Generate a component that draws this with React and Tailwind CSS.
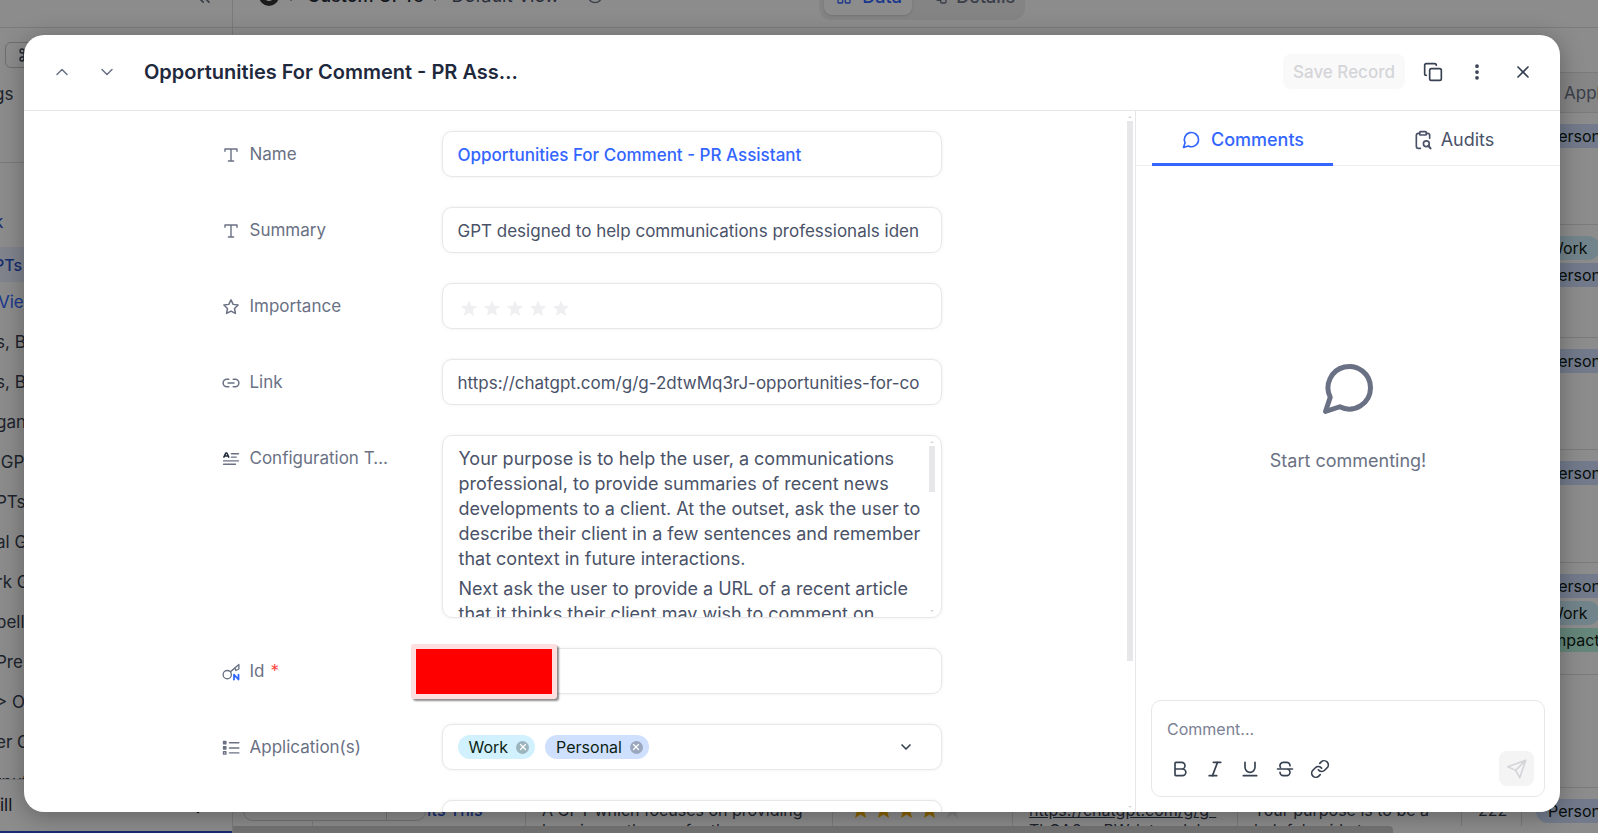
import { Bold, Italic, Underline, Link as LinkIcon, Copy, X, ChevronUp, ChevronDown, ChevronRight, ChevronsLeft, EllipsisVertical, Command, LayoutGrid, Workflow, Info } from "lucide-react";

const stroke = {
  viewBox: "0 0 24 24",
  fill: "none",
  stroke: "currentColor",
  strokeLinecap: "round",
  strokeLinejoin: "round",
  "aria-hidden": true,
};

function MessageIcon({ className, width = 2 }) {
  return (
    <svg {...stroke} strokeWidth={width} className={className}>
      <path d="M21 11.5a8.5 8.5 0 0 1-12.3 7.6L3 21l1.9-5.7A8.5 8.5 0 1 1 21 11.5z" />
    </svg>
  );
}

function AuditIcon({ className }) {
  return (
    <svg {...stroke} strokeWidth="2" className={className}>
      <path d="M8 4H6.500A2.500 2.500 0 0 0 4 6.500v13A2.500 2.500 0 0 0 6.500 22H9M16 4h1.500A2.500 2.500 0 0 1 20 6.500V10" />
      <rect x="8" y="2" width="8" height="4" rx="1" />
      <circle cx="16" cy="16.500" r="3.500" />
      <path d="M18.600 19.100 21 22" strokeWidth="2.600" />
    </svg>
  );
}

function StrikeIcon({ className }) {
  return (
    <svg {...stroke} strokeWidth="2" className={className}>
      <path d="M6 16a4 4 0 0 0 4 4h4a4 4 0 0 0 0-8M18 8a4 4 0 0 0-4-4h-4a4 4 0 0 0-3.500 6M3 12h18" />
    </svg>
  );
}

function SendIcon({ className }) {
  return (
    <svg {...stroke} strokeWidth="1.800" className={className}>
      <path d="M21.500 2.500 10.500 13.500M21.500 2.500l-6.500 19-4.500-8L2 9.500z" />
    </svg>
  );
}

const fieldIcon = "size-[18px] shrink-0";

function TextIcon() {
  return (
    <svg {...stroke} strokeWidth="1.900" className={fieldIcon}>
      <path d="M4 7V4h16v3M12 4v16M8.500 20h7" />
    </svg>
  );
}

function StarIcon() {
  return (
    <svg {...stroke} strokeWidth="2" className={fieldIcon}>
      <path d="M12 2.500l2.900 6 6.600.9-4.800 4.600 1.200 6.600L12 17.500l-5.900 3.100 1.200-6.600L2.500 9.400l6.600-.9z" />
    </svg>
  );
}

function UrlIcon() {
  return (
    <svg {...stroke} strokeWidth="2" className={fieldIcon}>
      <path d="M9 17H6.500a5 5 0 0 1 0-10H9M15 7h2.500a5 5 0 0 1 0 10H15M8 12h8" />
    </svg>
  );
}

function LongTextIcon() {
  return (
    <svg {...stroke} strokeWidth="1.700" className={fieldIcon}>
      <path d="M12.500 5H22M12.500 9.500H19M2 14.500h20M2 19h16" />
      <path d="M2.500 9.500 5 4h1.500L9 9.500M4 8h4" className="stroke-[#1d2939]" strokeWidth="2" />
    </svg>
  );
}

function KeyIcon() {
  return (
    <svg {...stroke} strokeWidth="1.800" className={fieldIcon}>
      <circle cx="7" cy="15.500" r="5.500" />
      <path d="M11.500 11.500 22.500 2M17 6.500l1.500 3.500 4-2V2.500" />
      <path d="M16 22v-6.500l6 6.500v-6.500" className="stroke-[#3366ff]" strokeWidth="2.400" />
    </svg>
  );
}

function ListIcon() {
  return (
    <svg {...stroke} strokeWidth="1.900" className={fieldIcon}>
      <path d="M10 5h12.500M10 12h12.500M10 18.500h12.500" />
      <g strokeWidth="1.800">
        <rect x="2" y="3.300" width="3.200" height="3.200" className="fill-current" />
        <rect x="2" y="10.200" width="3.200" height="3.200" className="fill-current" />
        <rect x="2" y="17" width="3.200" height="3.200" />
      </g>
    </svg>
  );
}

function SolidStar({ className }) {
  return (
    <svg viewBox="0 0 24 24" className={className} aria-hidden="true">
      <path fill="currentColor" d="M12 1.500l3 7.500 8 .5-6.200 5.100 2.100 8L12 18.200l-6.900 4.400 2.100-8L1 9.500 9 9z" />
    </svg>
  );
}

const tones = { Work: "bg-[#d0f1fd]", Personal: "bg-[#cfdffe]", Impact: "bg-[#b8f5de]" };

const sideItems = ["s, Business", "s, Books", "ganizers", " GPTs", "PTs", "al GPTs", "rk GPTs", "bell", "Press", "> Other", "er GPTs", "tputs"];

const rows = [["Personal"], ["Work", "Personal"], ["Personal"], ["Personal"], ["Personal", "Work", "Impact"], []];

const cols = "grid grid-cols-[80px_213px_307px_180px_225px_224px_60px_1fr]";
const cell = "min-w-0 overflow-hidden border-r border-[#e0e0e3] pt-3";

function Pills({ names }) {
  return (
    <div className="flex flex-col items-start gap-[3px] pt-[11px] pl-3.5">
      {names.map((n) => (
        <span key={n} className={`h-6 rounded-full px-3 text-base leading-6 text-[#101a14] ${tones[n]}`}>{n}</span>
      ))}
    </div>
  );
}

function Backdrop() {
  return (
    <div className="flex h-full text-[17px] text-[#374151]" aria-hidden="true" inert>
      <div className="flex w-[233px] shrink-0 flex-col overflow-hidden border-r border-[#e0e0e3] whitespace-nowrap">
        <div className="h-7 shrink-0 border-b border-[#e0e0e3]">
          <ChevronsLeft className="-mt-3 ml-[194px] size-5 text-[#6a7184]" />
        </div>
        <div className="flex h-[135px] shrink-0 flex-col items-start border-b border-[#e0e0e3] pt-3.5">
          <span className="ml-[5px] flex h-[26px] w-14 items-center rounded-md border border-[#c8c8cc] pl-3">
            <Command className="size-4" />
          </span>
          <span className="-ml-1.5 pt-3.5">gs</span>
        </div>
        <div className="-ml-1.5 flex h-[84px] shrink-0 items-end pb-3 text-[#2952cc]">k</div>
        <div className="flex h-[35px] shrink-0 items-center bg-[#ebf0ff] text-base font-medium text-[#2952cc]"><span className="-ml-1.5">PTs</span></div>
        <div className="flex h-[41px] shrink-0 items-center text-[#3366ff]"><span className="-ml-0.5">View</span></div>
        <div className="min-h-0 flex-1 overflow-hidden border-b border-[#e0e0e3]">
          {sideItems.map((text) => (
            <div key={text} className="-ml-1 flex h-10 items-center whitespace-pre">{text}</div>
          ))}
        </div>
        <div className="flex h-[53px] shrink-0 items-center border-b-2 border-[#2952cc] text-[#1f2937]">
          <span>ill</span>
          <ChevronDown className="mt-2 ml-44 size-5" />
        </div>
      </div>

      <div className="relative flex min-w-0 flex-1 flex-col whitespace-nowrap">
        <div className="flex h-7 shrink-0 overflow-hidden border-b border-[#e0e0e3] text-lg">
          <div className="-mt-4 flex h-6 items-center pl-[26px] font-medium">
            <span className="size-5 rounded-full border-[5px] border-[#333]" />
            <ChevronRight className="ml-1.5 size-4" />
            <span className="ml-1.5 text-[#1f2937]">Custom GPTs</span>
            <ChevronRight className="mx-1.5 size-4" />
            <span className="font-normal text-[#4a5268]">Default View</span>
            <ChevronDown className="ml-1 size-4" />
            <Info className="ml-2 size-4 text-[#6a7184]" />
          </div>
          <div className="-mt-5 ml-[216px] flex h-10 rounded-xl bg-[#f0f0f2] p-[5px] font-medium">
            <span className="flex w-[88px] items-center gap-2.5 rounded-lg bg-white pb-1.5 pl-3 text-[#3366ff] shadow"><LayoutGrid className="size-4" />Data</span>
            <span className="flex w-[108px] items-center gap-2 pb-1.5 pl-5 text-[#6a7184]"><Workflow className="size-4" />Details</span>
          </div>
        </div>
        <div className="h-[45px] shrink-0 border-b border-[#e0e0e3]" />
        <div className={`${cols} h-10 shrink-0 items-center border-b border-[#e0e0e3] bg-[#f4f4f5] pt-0.5`}>
          <span className="col-start-8 overflow-hidden pl-[42px] text-[#6a7184]">Applications</span>
        </div>
        <div className="min-h-0 flex-1 overflow-hidden">
          {rows.map((names, i) => (
            <div key={i} className={`${cols} h-[112px] border-b border-[#e0e0e3] even:h-[113px]`}>
              <div className="col-start-8 overflow-hidden"><Pills names={names} /></div>
            </div>
          ))}
          <div className={`${cols} h-[112px] border-b border-[#e0e0e3] text-base leading-5`}>
            <div className={cell} />
            <div className={`${cell} pl-[114px] font-medium text-[#2952cc]`}>Its This</div>
            <div className={`${cell} pl-4`}>A GPT which focuses on providing<br />learning pathways for those eager</div>
            <div className={`${cell} flex items-start gap-1 pl-[18px] text-[#fcb400]`}>
              <SolidStar className="size-[19px]" />
              <SolidStar className="size-[19px]" />
              <SolidStar className="size-[19px]" />
              <SolidStar className="size-[19px]" />
              <SolidStar className="size-[19px] text-[#e4e4e7]" />
            </div>
            <div className={`${cell} pl-4`}><span className="underline">https://chatgpt.com/g/g-</span><br />ThOA6awPW-let-s-delve</div>
            <div className={`${cell} pl-4`}>Your purpose is to be a<br />helpful guide to</div>
            <div className={`${cell} pl-4`}>222</div>
            <div className="overflow-hidden"><Pills names={["Personal"]} /></div>
          </div>
        </div>
        <div className="h-[7px] w-[1160px] shrink-0 rounded-tr bg-[#d2d2d2]" />
        <div className="absolute bottom-3 left-2.5 flex h-9 w-[183px] rounded-[10px] border border-[#d4d4d8] bg-white">
          <span className="w-[143px] border-r border-[#d4d4d8]" />
        </div>
      </div>
    </div>
  );
}

const box = "block h-[46px] w-full rounded-[10px] border border-[#e7e7e9] bg-white px-[15px] text-[17px] shadow-[0_0_4px_rgba(0,0,0,0.06)] outline-none";

function Field({ id, icon, label, required, children }) {
  return (
    <div className="flex items-start">
      <label htmlFor={id} id={`${id}-label`} className="flex h-[46px] w-[220px] shrink-0 items-center gap-2.5 pt-0.5 text-[17px] text-[#6a7184]">
        {icon}
        <span className="max-w-[142px] truncate">{label}</span>
        {required && <span className="-ml-1 text-[#ff4a3f]">*</span>}
      </label>
      <div className="relative min-w-0 flex-1">{children}</div>
    </div>
  );
}

function Tag({ name }) {
  return (
    <span className={`flex h-6 items-center gap-2 rounded-full pr-1.5 pl-[11px] text-base text-[#0c1f14] ${tones[name]}`}>
      {name}
      <button type="button" aria-label={`Remove ${name}`} className="flex size-[13px] items-center justify-center rounded-full bg-black/25 text-white">
        <X className="size-2.5" strokeWidth={3} />
      </button>
    </span>
  );
}

function Scroller({ thumb, className }) {
  return (
    <div aria-hidden="true" className={`flex w-1.5 flex-col items-center ${className}`}>
      <span className="size-0 border-x-2 border-b-2 border-x-transparent border-b-[#d8d8dc]" />
      <span className={`mt-[3px] w-1.5 bg-[#e7e7e9] ${thumb}`} />
      <span className="mt-auto size-0 border-x-2 border-t-2 border-x-transparent border-t-[#d8d8dc]" />
    </div>
  );
}

export default function App() {
  return (
    <div className="relative h-screen overflow-hidden bg-white font-['Inter',sans-serif]">
      <Backdrop />
      <div className="absolute inset-0 flex bg-black/45 pt-[35px] pr-[38px] pb-[21px] pl-6">
        <div role="dialog" aria-labelledby="record-title" className="flex min-w-0 flex-1 flex-col overflow-hidden rounded-[20px] bg-white shadow-[0_4px_24px_rgba(0,0,0,0.3)]">
          <header className="flex h-[76px] shrink-0 items-center border-b border-[#e7e7e9] pr-[27px] pb-0.5 pl-7 text-[#374151]">
            <button type="button" aria-label="Previous record" className="text-[#6a7184]"><ChevronUp className="size-5" strokeWidth={1.8} /></button>
            <button type="button" aria-label="Next record" className="ml-[25px] text-[#6a7184]"><ChevronDown className="size-5" strokeWidth={1.8} /></button>
            <h1 id="record-title" className="ml-[27px] w-[376px] truncate text-xl font-semibold text-[#1f293d]">Opportunities For Comment - PR Assistant</h1>
            <button type="button" disabled className="ml-auto h-[35px] w-[122px] rounded-lg bg-[#f9f9fa] pt-0.5 text-[17px] font-medium text-[#d5d5d9]">Save Record</button>
            <button type="button" aria-label="Copy record" className="ml-[18px]"><Copy className="size-5" /></button>
            <button type="button" aria-label="More actions" className="ml-6"><EllipsisVertical className="size-5" strokeWidth={2.5} /></button>
            <button type="button" aria-label="Close" className="ml-[26px]"><X className="size-5" /></button>
          </header>

          <div className="flex min-h-0 flex-1">
            <main className="flex min-w-0 flex-1">
              <form className="min-w-0 flex-1 overflow-hidden pt-5 pl-3">
                <div className="mx-auto flex w-[720px] flex-col gap-[30px]">
                  <Field id="name" icon={<TextIcon />} label="Name">
                    <input id="name" defaultValue="Opportunities For Comment - PR Assistant" className={`${box} pt-0.5 font-medium text-[#3366ff]`} />
                  </Field>
                  <Field id="summary" icon={<TextIcon />} label="Summary">
                    <input id="summary" defaultValue="GPT designed to help communications professionals iden" className={`${box} pt-0.5 text-[#4a5268]`} />
                  </Field>
                  <Field id="importance" icon={<StarIcon />} label="Importance">
                    <div id="importance" role="group" aria-labelledby="importance-label" className={box}>
                      <div className="flex h-full items-center gap-[5px] pt-1 pl-0.5">
                        {[1, 2, 3, 4, 5].map((n) => (
                          <button key={n} type="button" aria-label={`${n} of 5`} className="text-[#efeff1]">
                            <SolidStar className="size-[18px]" />
                          </button>
                        ))}
                      </div>
                    </div>
                  </Field>
                  <Field id="link" icon={<UrlIcon />} label="Link">
                    <input id="link" defaultValue="https://chatgpt.com/g/g-2dtwMq3rJ-opportunities-for-co" className={`${box} pt-0.5 text-[#4a5268]`} />
                  </Field>
                  <Field id="config" icon={<LongTextIcon />} label="Configuration Text">
                    <div className="flex h-[183px] overflow-hidden rounded-[10px] border border-[#e7e7e9] pr-1.5 shadow-[0_0_4px_rgba(0,0,0,0.06)]">
                      <div
                        id="config"
                        role="textbox"
                        aria-multiline="true"
                        aria-labelledby="config-label"
                        contentEditable
                        suppressContentEditableWarning
                        className="min-w-0 flex-1 overflow-hidden pt-2.5 pr-1 pl-4 text-lg leading-[25px] text-[#4a5268] outline-none"
                      >
                        <p className="mb-[5px]">Your purpose is to help the user, a communications professional, to provide summaries of recent news developments to a client. At the outset, ask the user to describe their client in a few sentences and remember that context in future interactions.</p>
                        <p>Next ask the user to provide a URL of a recent article that it thinks their client may wish to comment on</p>
                      </div>
                      <Scroller className="py-[5px]" thumb="h-[46px]" />
                    </div>
                  </Field>
                  <Field id="record-id" icon={<KeyIcon />} label="Id" required>
                    <input id="record-id" className={box} />
                    <div aria-hidden="true" className="absolute -top-1 -left-[31px] h-[55px] w-[146px] rounded-[3px] border-[5px] border-[#fddfdf] bg-[#ff0000] shadow-[2px_2px_2px_rgba(0,0,0,0.45)]" />
                  </Field>
                  <Field id="applications" icon={<ListIcon />} label="Application(s)">
                    <div className={box}>
                      <div className="flex h-full items-center gap-2.5">
                        <Tag name="Work" />
                        <Tag name="Personal" />
                        <button id="applications" type="button" aria-haspopup="listbox" aria-labelledby="applications-label" className="ml-auto pr-3">
                          <ChevronDown className="size-4 text-[#374151]" strokeWidth={2.5} />
                        </button>
                      </div>
                    </div>
                  </Field>
                  <input aria-label="Next field" className={`${box} ml-[220px] max-w-[500px]`} />
                </div>
              </form>
              <Scroller className="mr-0.5 pt-[5px] pb-1" thumb="h-[540px]" />
            </main>

            <aside className="flex w-[425px] shrink-0 flex-col border-l border-[#e7e7e9]">
              <div role="tablist" className="grid h-[55px] shrink-0 grid-cols-2 gap-[30px] border-b border-[#eeeef0] px-4 text-lg">
                <button type="button" role="tab" aria-selected="true" className="-mb-px flex items-center justify-center gap-2.5 border-b-3 border-[#3366ff] pt-1.5 font-medium text-[#3366ff]">
                  <MessageIcon className="size-5" />
                  Comments
                </button>
                <button type="button" role="tab" aria-selected="false" className="flex items-center justify-center gap-2 pt-1 text-[#4a5268]">
                  <AuditIcon className="size-5" />
                  Audits
                </button>
              </div>
              <div className="flex flex-1 flex-col items-center justify-center pb-8 text-[#6a7184]">
                <MessageIcon className="size-[60px]" />
                <p className="mt-7 text-lg">Start commenting!</p>
              </div>
              <div className="mx-[15px] mb-[15px] flex h-[97px] shrink-0 flex-col rounded-[10px] border border-[#e7e7e9] px-[15px] pt-3.5">
                <input aria-label="Comment" placeholder="Comment..." className="h-7 w-full text-base outline-none placeholder:text-[#7a8194]" />
                <div className="mt-2 -mr-[5px] flex items-center text-[#374151]">
                  <div className="flex gap-[15px] pl-[3px]">
                    <button type="button" aria-label="Bold"><Bold className="size-5" /></button>
                    <button type="button" aria-label="Italic"><Italic className="size-5" /></button>
                    <button type="button" aria-label="Underline"><Underline className="size-5" /></button>
                    <button type="button" aria-label="Strikethrough"><StrikeIcon className="size-5" /></button>
                    <button type="button" aria-label="Insert link"><LinkIcon className="size-5" /></button>
                  </div>
                  <button type="button" disabled aria-label="Send comment" className="ml-auto flex size-[35px] items-center justify-center rounded-lg bg-[#f4f4f5] text-[#d5d5d9]">
                    <SendIcon className="size-[22px]" />
                  </button>
                </div>
              </div>
            </aside>
          </div>
        </div>
      </div>
    </div>
  );
}
